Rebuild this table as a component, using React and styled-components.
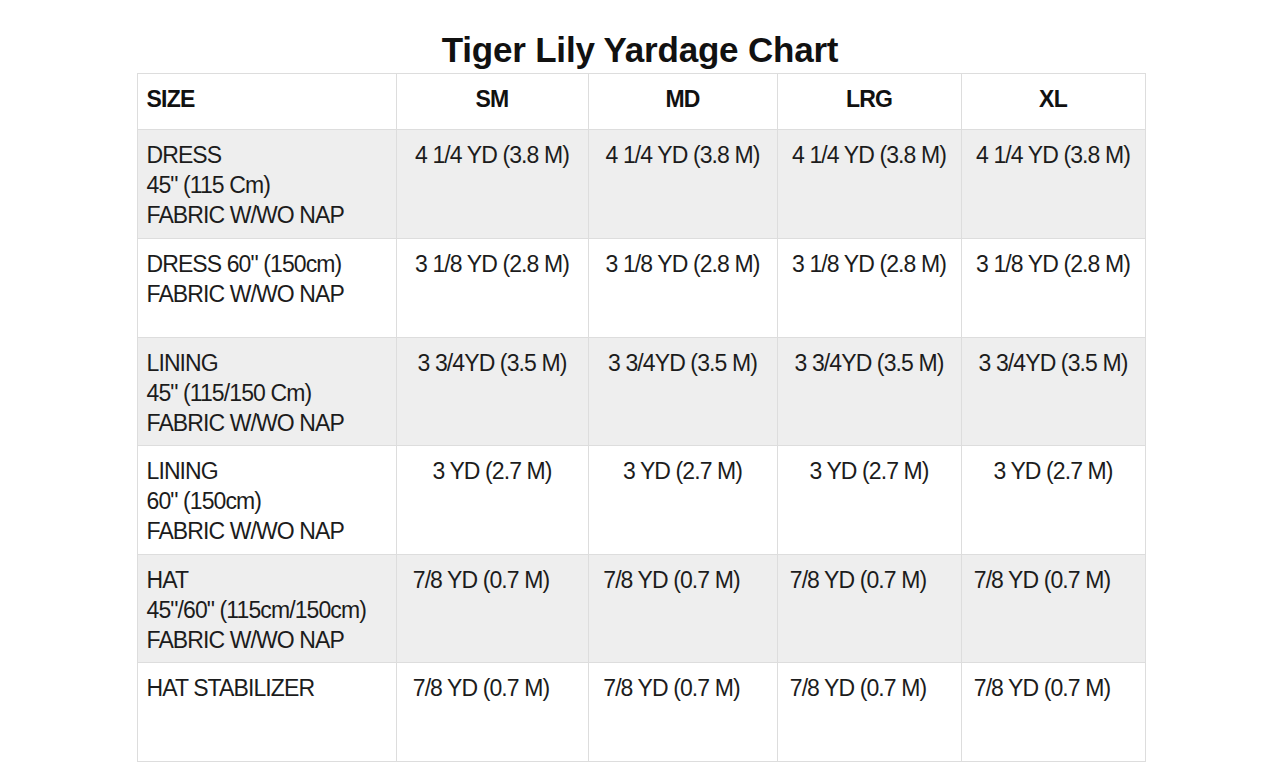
import styled, { createGlobalStyle } from 'styled-components'

const GlobalStyle = createGlobalStyle`
    body {
        margin: 0;
        background: #ffffff;
        font-family: "Liberation Sans", Arial, sans-serif;
        color: #1a1a1a;
    }
`;

const Page = styled.div`
    width: 1280px;
    height: 780px;
    overflow: hidden;
    display: flex;
    flex-direction: column;
    align-items: center;
`;

const Title = styled.h1`
    margin: 30px 0 0;
    height: 43px;
    font-size: 35px;
    line-height: 40px;
    font-weight: 700;
    letter-spacing: -0.2px;
    color: #111111;
`;

const Table = styled.table`
    border-collapse: collapse;
    table-layout: fixed;
    width: 1009px;
    margin-left: 2px;
`;

const Row = styled.tr`
    height: ${props => props.height}px;
    background: ${props => props.shaded ? '#eeeeee' : '#ffffff'};
`;

const HeadCell = styled.th`
    border: 1px solid #dddddd;
    padding: 10px 9px 0;
    font-size: 23px;
    line-height: 30px;
    letter-spacing: -0.8px;
    font-weight: 700;
    text-align: ${props => props.left ? 'left' : 'center'};
    vertical-align: top;
    color: #111111;
`;

const Cell = styled.td`
    border: 1px solid #dddddd;
    padding: 10px 9px 0;
    padding-right: ${props => props.trail ? 9 + props.trail : 9}px;
    font-size: 23px;
    line-height: 30px;
    letter-spacing: -0.9px;
    text-align: ${props => props.left ? 'left' : 'center'};
    vertical-align: top;
    white-space: nowrap;
    color: #1c1c1c;
`;

const widths = [259, 192, 189, 184, 184]
const sizes = ['SM', 'MD', 'LRG', 'XL']

const rows = [
    { label: ['DRESS', '45" (115 Cm)', 'FABRIC W/WO NAP'], value: '4 1/4 YD (3.8 M)', height: 109 },
    { label: ['DRESS 60" (150cm)', 'FABRIC W/WO NAP'], value: '3 1/8 YD (2.8 M)', height: 99 },
    { label: ['LINING', '45" (115/150 Cm)', 'FABRIC W/WO NAP'], value: '3 3/4YD (3.5 M)', height: 108 },
    { label: ['LINING', '60" (150cm)', 'FABRIC W/WO NAP'], value: '3 YD (2.7 M)', height: 109 },
    { label: ['HAT', '45"/60" (115cm/150cm)', 'FABRIC W/WO NAP'], value: '7/8 YD (0.7 M)', height: 108, trail: 22 },
    { label: ['HAT STABILIZER'], value: '7/8 YD (0.7 M)', height: 99, trail: 22 },
]

const App = () => {
    return (
        <Page>
            <GlobalStyle />
            <Title>Tiger Lily Yardage Chart</Title>
            <Table>
                <colgroup>
                    {widths.map((w, i) => <col key={i} style={{ width: w }} />)}
                </colgroup>
                <tbody>
                    <Row height={56}>
                        <HeadCell left>SIZE</HeadCell>
                        {sizes.map(s => <HeadCell key={s}>{s}</HeadCell>)}
                    </Row>
                    {rows.map((row, i) => (
                        <Row key={i} height={row.height} shaded={i % 2 === 0}>
                            <Cell left>
                                {row.label.map((line, j) => <div key={j}>{line}</div>)}
                            </Cell>
                            {sizes.map(s => <Cell key={s} trail={row.trail}>{row.value}</Cell>)}
                        </Row>
                    ))}
                </tbody>
            </Table>
        </Page>
    )
}

export default App
